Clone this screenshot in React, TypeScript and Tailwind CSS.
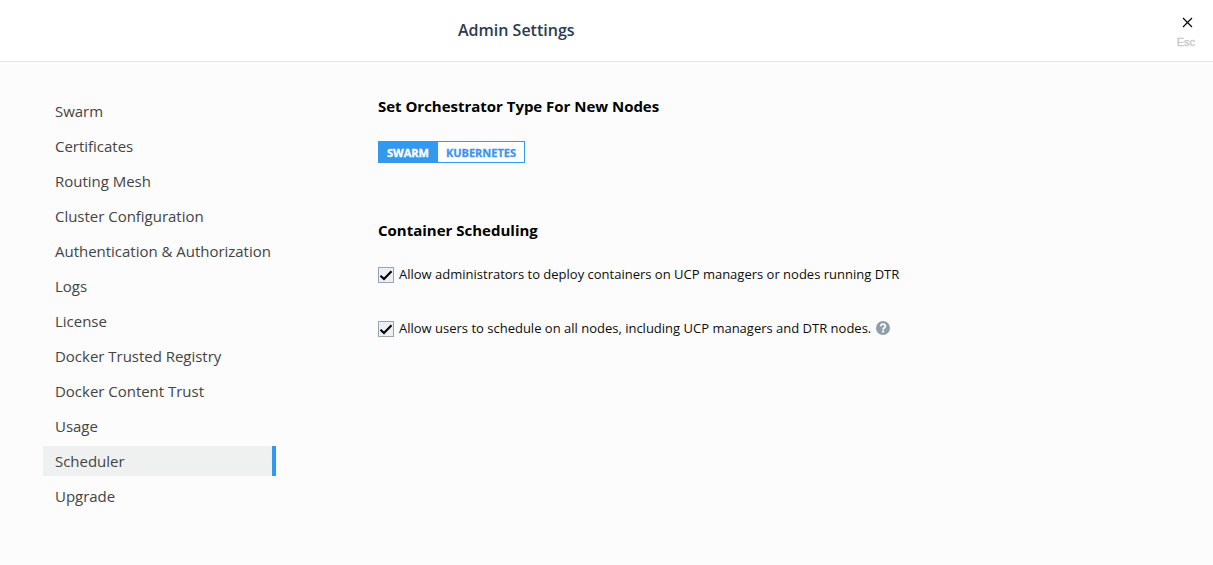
import type { ReactNode } from "react";

const items = [
  "Swarm",
  "Certificates",
  "Routing Mesh",
  "Cluster Configuration",
  "Authentication & Authorization",
  "Logs",
  "License",
  "Docker Trusted Registry",
  "Docker Content Trust",
  "Usage",
  "Scheduler",
  "Upgrade",
];

function Checkbox({ children }: { children: ReactNode }) {
  return (
    <div className="flex h-5 items-center text-[13px] text-[#0c0c0c]">
      <svg className="mr-[5px] mt-px h-4 w-4 shrink-0" viewBox="0 0 16 16" fill="none">
        <rect x="0.5" y="0.5" width="15" height="15" fill="#eceff4" stroke="#99a3b2" />
        <path d="M2.5 8.7 6 12 13.5 4.2" stroke="#000" strokeWidth="2.1" />
      </svg>
      <span className="leading-5 whitespace-nowrap">{children}</span>
    </div>
  );
}

export default function App() {
  return (
    <div className="flex h-[565px] w-[1213px] flex-col overflow-hidden bg-[#fcfcfc] font-['Open_Sans',sans-serif]">
      <header className="flex h-[62px] shrink-0 justify-between border-b border-[#e3e4e5] bg-white">
        <h1 className="ml-[458px] mt-[18px] text-base leading-6 font-semibold text-[#2c3b4e]">Admin Settings</h1>
        <button className="mr-[18px] mt-[17px] flex flex-col items-center">
          <svg className="ml-[3px] h-[11px] w-[11px]" viewBox="0 0 11 11" stroke="#000" strokeWidth="1.2">
            <path d="M1 1l9 9M10 1l-9 9" />
          </svg>
          <span className="mt-[7px] font-['Liberation_Sans',sans-serif] text-[11px] leading-[14px] text-[#c4c4c4] [-webkit-text-stroke:0.3px_#c8c8c8]">
            Esc
          </span>
        </button>
      </header>
      <div className="flex grow">
        <nav className="ml-[43px] mt-[34px] flex w-[233px] shrink-0 flex-col gap-[5px]">
          {items.map((item) => (
            <a
              key={item}
              className={
                item === "Scheduler"
                  ? "h-[30px] border-r-4 border-[#3399ee] bg-[#eff1f1] pl-3 text-[15px] leading-[30px] tracking-[-0.02px] whitespace-nowrap text-[#444]"
                  : "h-[30px] pl-3 text-[15px] leading-[30px] tracking-[-0.02px] whitespace-nowrap text-[#444]"
              }
            >
              {item}
            </a>
          ))}
        </nav>
        <main className="ml-[102px] flex flex-col items-start pt-[34px]">
          <h2 className="text-[15px] leading-5 font-bold tracking-[-0.02px] text-black">
            Set Orchestrator Type For New Nodes
          </h2>
          <div className="mt-[25px] flex h-[22px] border border-[#3399ee] text-[11px] leading-[22px] font-bold">
            <button className="w-[59px] bg-[#3399ee] pr-px text-white [-webkit-text-stroke:0.3px_#fff]">SWARM</button>
            <button className="w-[86px] bg-white text-[#3f94ee] [-webkit-text-stroke:0.3px_#3f94ee]">KUBERNETES</button>
          </div>
          <h2 className="mt-[57px] text-[15px] leading-5 font-bold text-black">Container Scheduling</h2>
          <div className="mt-6">
            <Checkbox>Allow administrators to deploy containers on UCP managers or nodes running DTR</Checkbox>
          </div>
          <div className="mt-[34px] flex items-center">
            <Checkbox>Allow users to schedule on all nodes, including UCP managers and DTR nodes.</Checkbox>
            <svg className="ml-[5px] h-[14px] w-[14px]" viewBox="0 0 14 14" fill="none">
              <circle cx="7" cy="7" r="7" fill="#8f9eaa" />
              <path d="M4.7 5.3C4.8 2.5 9.4 2.6 9.4 5.1 9.4 6.8 7.1 6.7 7.1 8.7" stroke="#fff" strokeWidth="1.8" />
              <rect x="6.1" y="9.6" width="2" height="1.9" fill="#fff" />
            </svg>
          </div>
        </main>
      </div>
    </div>
  );
}
